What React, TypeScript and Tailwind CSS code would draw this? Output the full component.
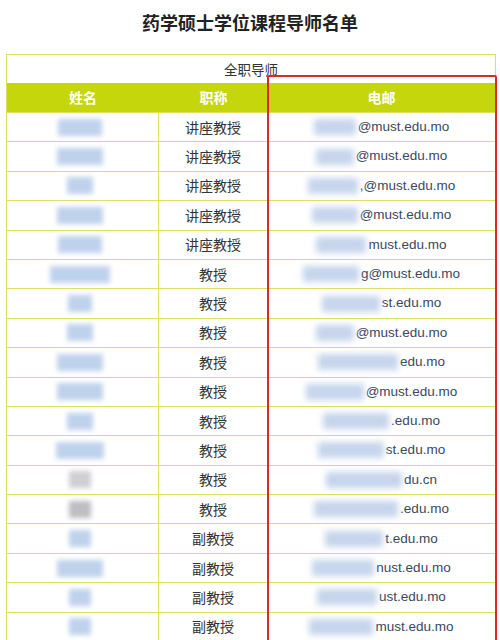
import React from "react";

type Row = { title: string; nameW: number; nameC?: string; blobW: number; email: string };

const rows: Row[] = [
  { title: "讲座教授", nameW: 44, blobW: 42, email: "@must.edu.mo" },
  { title: "讲座教授", nameW: 46, blobW: 38, email: "@must.edu.mo" },
  { title: "讲座教授", nameW: 26, blobW: 50, email: ",@must.edu.mo" },
  { title: "讲座教授", nameW: 46, blobW: 46, email: "@must.edu.mo" },
  { title: "讲座教授", nameW: 44, blobW: 50, email: "must.edu.mo" },
  { title: "教授", nameW: 60, blobW: 56, email: "g@must.edu.mo" },
  { title: "教授", nameW: 24, blobW: 58, email: "st.edu.mo" },
  { title: "教授", nameW: 26, blobW: 38, email: "@must.edu.mo" },
  { title: "教授", nameW: 46, blobW: 80, email: "edu.mo" },
  { title: "教授", nameW: 46, blobW: 58, email: "@must.edu.mo" },
  { title: "教授", nameW: 26, blobW: 66, email: ".edu.mo" },
  { title: "教授", nameW: 48, blobW: 66, email: "st.edu.mo" },
  { title: "教授", nameW: 22, nameC: "#cfcfd4", blobW: 76, email: "du.cn" },
  { title: "教授", nameW: 22, nameC: "#bdbdc2", blobW: 84, email: ".edu.mo" },
  { title: "副教授", nameW: 22, blobW: 58, email: "t.edu.mo" },
  { title: "副教授", nameW: 46, blobW: 62, email: "nust.edu.mo" },
  { title: "副教授", nameW: 22, blobW: 60, email: "ust.edu.mo" },
  { title: "副教授", nameW: 22, blobW: 64, email: "must.edu.mo" },
];

const cjk = { fontFamily: '"Noto Sans CJK SC", "Noto Sans", sans-serif' };
const latin = { fontFamily: '"Liberation Sans", Arial, sans-serif' };

export default function App() {
  return (
    <div className="relative w-[500px] h-[640px] overflow-hidden bg-white" style={cjk}>
      <div className="pt-[10px] h-[24px] box-content text-center text-[18px] leading-[24px] font-bold text-[#222]">
        药学硕士学位课程导师名单
      </div>
      <div className="mt-[20px] ml-[6px] w-[490px] border border-[#e2dc60]">
        <div className="h-[28px] flex items-center justify-center text-[13.5px] text-[#333]">全职导师</div>
        <div className="h-[30px] grid grid-cols-[152px_109px_1fr] bg-[#c6d60c] text-white font-bold text-[14px] border-b border-[#e2dc60]">
          <div className="flex items-center justify-center">姓名</div>
          <div className="flex items-center justify-center">职称</div>
          <div className="flex items-center justify-center">电邮</div>
        </div>
        {rows.map((r, i) => (
          <div key={i} className="h-[29.4px] grid grid-cols-[152px_109px_1fr] border-b border-[#e2dc60]">
            <div className="flex items-center justify-center border-r border-[#e2dc60]">
              <span
                className="inline-block h-[17px] blur-[2.5px] -ml-[6px]"
                style={{ width: r.nameW, background: r.nameC ?? "#bfd2ec" }}
              />
            </div>
            <div className="flex items-center justify-center border-r border-[#e2dc60] text-[14px] text-[#333]">
              {r.title}
            </div>
            <div className="flex items-center justify-center">
              <span className="inline-block h-[16px] bg-[#c6d5ec] blur-[3px]" style={{ width: r.blobW }} />
              <span className="text-[13.5px] text-[#3a4860] ml-[2px]" style={latin}>
                {r.email}
              </span>
            </div>
          </div>
        ))}
      </div>
      <div className="absolute left-[267px] top-[75px] w-[230px] h-[600px] border-[2.5px] border-[#e1262b] rounded-[2px]" />
    </div>
  );
}
